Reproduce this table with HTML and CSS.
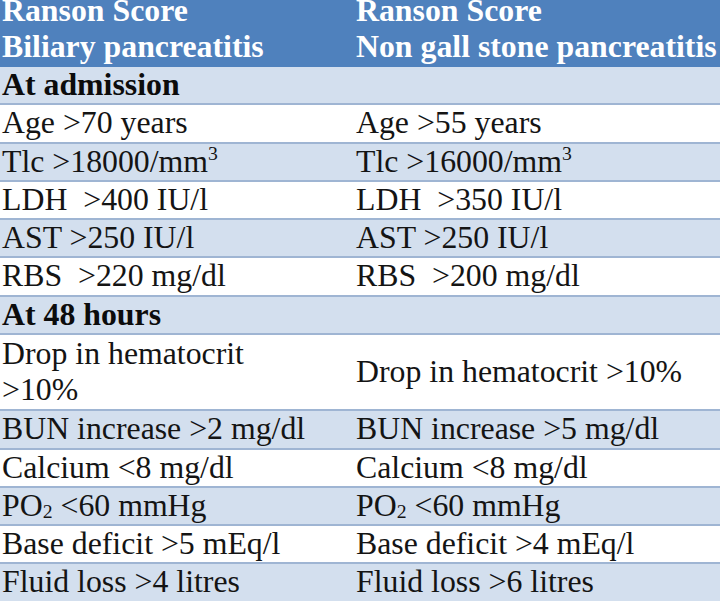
FILE: index.html
```html
<!DOCTYPE html>
<html>
<head>
<meta charset="utf-8">
<link rel="stylesheet" href="styles.css">
</head>
<body>
<table class="ranson">
  <colgroup><col class="c1"><col class="c2"></colgroup>
  <thead>
    <tr class="head">
      <th>Ranson Score<br>Biliary pancreatitis</th>
      <th>Ranson Score<br>Non gall stone pancreatitis</th>
    </tr>
  </thead>
  <tbody>
    <tr class="band section"><td>At admission</td><td></td></tr>
    <tr><td>Age &gt;70 years</td><td>Age &gt;55 years</td></tr>
    <tr class="band"><td>Tlc &gt;18000/mm<sup>3</sup></td><td>Tlc &gt;16000/mm<sup>3</sup></td></tr>
    <tr><td>LDH&nbsp; &gt;400 IU/l</td><td>LDH&nbsp; &gt;350 IU/l</td></tr>
    <tr class="band"><td>AST &gt;250 IU/l</td><td>AST &gt;250 IU/l</td></tr>
    <tr><td>RBS&nbsp; &gt;220 mg/dl</td><td>RBS&nbsp; &gt;200 mg/dl</td></tr>
    <tr class="band section"><td>At 48 hours</td><td></td></tr>
    <tr class="tall"><td>Drop in hematocrit<br>&gt;10%</td><td>Drop in hematocrit &gt;10%</td></tr>
    <tr class="band"><td>BUN increase &gt;2 mg/dl</td><td>BUN increase &gt;5 mg/dl</td></tr>
    <tr><td>Calcium &lt;8 mg/dl</td><td>Calcium &lt;8 mg/dl</td></tr>
    <tr class="band"><td>PO<sub>2</sub> &lt;60 mmHg</td><td>PO<sub>2</sub> &lt;60 mmHg</td></tr>
    <tr><td>Base deficit &gt;5 mEq/l</td><td>Base deficit &gt;4 mEq/l</td></tr>
    <tr class="band"><td>Fluid loss &gt;4 litres</td><td>Fluid loss &gt;6 litres</td></tr>
  </tbody>
</table>
</body>
</html>
```

FILE: styles.css
```css
html, body {
  margin: 0;
  padding: 0;
  background: #ffffff;
  overflow: hidden;
}

.ranson {
  margin-top: -7px;
  width: 740px;
  table-layout: fixed;
  border-collapse: collapse;
  font-family: "Liberation Serif", "Times New Roman", serif;
  font-size: 31.8px;
  color: #141414;
}

.c1 { width: 354px; }
.c2 { width: 386px; }

.ranson th,
.ranson td {
  text-align: left;
  vertical-align: middle;
  padding: 0 0 0 2px;
  white-space: nowrap;
}

.head th {
  background: #4f81bd;
  color: #ffffff;
  font-weight: bold;
  line-height: 36px;
  padding-bottom: 2px;
}

.ranson td {
  line-height: 36.25px;
  border-bottom: 2px solid #9fb5d3;
  background: #ffffff;
}

.ranson tr:last-child td {
  border-bottom: none;
}

.band td {
  background: #d3dfee;
}

.section td {
  font-weight: bold;
  color: #0c0c0c;
}

.tall td {
  padding-top: 1px;
  padding-bottom: 1px;
}

.ranson sup {
  font-size: 0.62em;
  line-height: 0;
  vertical-align: 0.62em;
}

.ranson sub {
  font-size: 0.62em;
  line-height: 0;
  vertical-align: -0.12em;
}
```
